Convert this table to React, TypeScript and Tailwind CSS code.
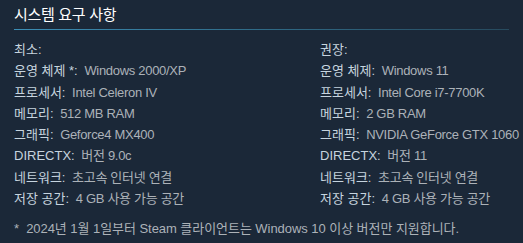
import React from "react";

type Req = { label: string; value: string };

const minimum: Req[] = [
  { label: "운영 체제 *:", value: "Windows 2000/XP" },
  { label: "프로세서:", value: "Intel Celeron IV" },
  { label: "메모리:", value: "512 MB RAM" },
  { label: "그래픽:", value: "Geforce4 MX400" },
  { label: "DIRECTX:", value: "버전 9.0c" },
  { label: "네트워크:", value: "초고속 인터넷 연결" },
  { label: "저장 공간:", value: "4 GB 사용 가능 공간" },
];

const recommended: Req[] = [
  { label: "운영 체제:", value: "Windows 11" },
  { label: "프로세서:", value: "Intel Core i7-7700K" },
  { label: "메모리:", value: "2 GB RAM" },
  { label: "그래픽:", value: "NVIDIA GeForce GTX 1060" },
  { label: "DIRECTX:", value: "버전 11" },
  { label: "네트워크:", value: "초고속 인터넷 연결" },
  { label: "저장 공간:", value: "4 GB 사용 가능 공간" },
];

const ReqColumn = ({ title, items }: { title: string; items: Req[] }) => (
  <ul className="flex flex-col gap-[5.3px]">
    <li className="text-[#c6d4df]">{title}</li>
    {items.map((item) => (
      <li key={item.label} className="whitespace-nowrap">
        <span className="text-[#c6d4df]">{item.label}</span>
        <span className="text-[#acb2b8] tracking-[-0.3px]">&nbsp; {item.value}</span>
      </li>
    ))}
  </ul>
);

export default function App() {
  return (
    <div
      className="w-[523px] h-[243px] overflow-hidden bg-[#1b2838] px-[14px] pt-[6px]"
      style={{ fontFamily: '"Liberation Sans", "Noto Sans CJK KR", sans-serif' }}
    >
      <div className="relative pb-[6px]">
        <h2 className="text-[15px] leading-[18px] text-white tracking-[-0.02em]">
          시스템 요구 사항
        </h2>
        <div className="absolute left-0 right-0 bottom-0 h-px bg-gradient-to-r from-[#3c8eb5] via-[#2f6a86] to-[#274a5e]" />
      </div>

      <div className="mt-[12px] grid grid-cols-[306px_1fr] text-[13px] leading-[16px]">
        <ReqColumn title="최소:" items={minimum} />
        <ReqColumn title="권장:" items={recommended} />
      </div>

      <p className="mt-[14px] text-[13px] leading-[16px] text-[#acb2b8] whitespace-nowrap tracking-[-0.05px]">
        *&nbsp; 2024년 1월 1일부터 Steam 클라이언트는 Windows 10 이상 버전만 지원합니다.
      </p>
    </div>
  );
}
